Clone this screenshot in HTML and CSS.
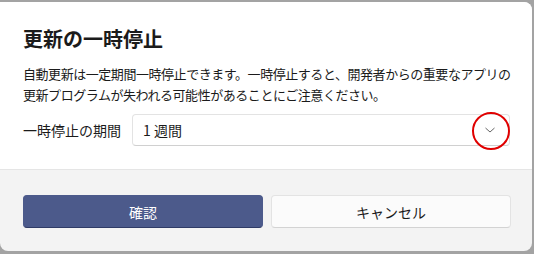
FILE: index.html
```html
<!DOCTYPE html>
<html lang="ja">
<head>
<meta charset="utf-8">
<link rel="stylesheet" href="styles.css">
</head>
<body>
<div class="dialog">
  <div class="content">
    <h1 class="title">更新の一時停止</h1>
    <p class="desc">自動更新は一定期間一時停止できます。一時停止すると、開発者からの重要なアプリの<br>更新プログラムが失われる可能性があることにご注意ください。</p>
    <div class="row">
      <span class="label">一時停止の期間</span>
      <div class="select">
        <span class="value">1 週間</span>
        <span class="chev">
          <svg width="12" height="8" viewBox="0 0 12 8"><path d="M1.5 2 L6 6 L10.5 2" fill="none" stroke="#666" stroke-width="1"/></svg>
          <span class="ring"></span>
        </span>
      </div>
    </div>
  </div>
  <div class="footer">
    <button class="btn primary">確認</button>
    <button class="btn secondary">キャンセル</button>
  </div>
</div>
</body>
</html>
```
FILE: styles.css
```css
html, body {
  margin: 0;
  padding: 0;
  background: #a3a3a3;
  width: 534px;
  height: 254px;
  overflow: hidden;
}
body {
  padding: 2px 2px 3px 0;
  box-sizing: border-box;
  font-family: "Noto Sans CJK JP", "Noto Sans", sans-serif;
  color: #1b1b1b;
}
.dialog {
  width: 532px;
  height: 249px;
  background: #f3f3f3;
  border-radius: 0 8px 8px 8px;
  overflow: hidden;
  display: flex;
  flex-direction: column;
}
.content {
  background: #ffffff;
  padding: 23px 22px 0 23px;
  height: 168px;
  box-sizing: border-box;
  border-bottom: 1px solid #e5e5e5;
}
.title {
  margin: 0;
  font-size: 20px;
  font-weight: 600;
  line-height: 28px;
}
.desc {
  margin: 10px 0 0 0;
  font-size: 13px;
  line-height: 21px;
  letter-spacing: -0.45px;
  white-space: nowrap;
}
.row {
  display: flex;
  align-items: center;
  margin-top: 9px;
}
.label {
  font-size: 14px;
  width: 109px;
}
.select {
  position: relative;
  flex: 1;
  height: 32px;
  box-sizing: border-box;
  border: 1px solid #e3e3e3;
  border-bottom-color: #d0d0d0;
  border-radius: 4px;
  display: flex;
  align-items: center;
  padding-left: 10px;
  font-size: 14px;
}
.value {
  flex: 1;
}
.chev {
  position: relative;
  width: 36px;
  height: 30px;
  display: flex;
  align-items: center;
  justify-content: center;
  margin-right: 1px;
}
.ring {
  position: absolute;
  left: 50%;
  top: 50%;
  width: 34px;
  height: 34px;
  margin: -18px 0 0 -18px;
  border: 2px solid #e00000;
  border-radius: 50%;
}
.footer {
  flex: 1;
  display: flex;
  gap: 8px;
  padding: 25px 21px 0 23px;
}
.btn {
  flex: 1;
  height: 33px;
  border-radius: 4px;
  font-family: inherit;
  font-size: 14px;
  cursor: pointer;
}
.primary {
  background: #4c5a8b;
  color: #ffffff;
  border: 1px solid #4c5a8b;
  border-bottom-color: #2f3b66;
}
.secondary {
  background: #fbfbfb;
  color: #1b1b1b;
  border: 1px solid #e3e3e3;
  border-bottom-color: #d3d3d3;
}
```
